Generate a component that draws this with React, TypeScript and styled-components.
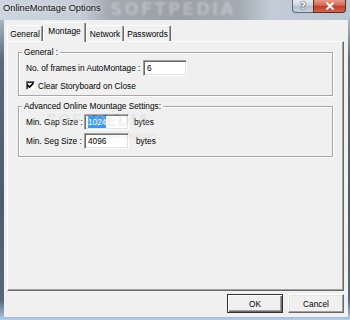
import React from "react";
import styled, { createGlobalStyle } from "styled-components";

const Global = createGlobalStyle`
  html, body { margin: 0; padding: 0; background: #5f7386; }
  body { font-family: "Liberation Sans", Arial, sans-serif; }
  * { box-sizing: border-box; }
`;

const Window = styled.div`
  width: 350px;
  height: 320px;
  display: flex;
  flex-direction: column;
  overflow: hidden;
  position: relative;
  font-family: "Liberation Sans", Arial, sans-serif;
  font-size: 8.3px;
  color: #000;
`;

const TitleBar = styled.div`
  height: 20px;
  flex: none;
  display: flex;
  align-items: flex-start;
  position: relative;
  background: linear-gradient(
    to right,
    #cdd5de 0px,
    #c4ccd5 80px,
    #a3a9b0 110px,
    #9a9fa5 180px,
    #a4abb2 240px,
    #c2ccd6 270px,
    #b9c6d3 350px
  );
`;

const Title = styled.div`
  font-size: 9.3px;
  line-height: 16px;
  padding-left: 3px;
  color: #111;
  text-shadow: 0 0 4px rgba(255, 255, 255, 0.9);
  position: relative;
  z-index: 1;
`;

const TitleMark = styled.div`
  position: absolute;
  left: 110px;
  top: 0px;
  line-height: 18px;
  font-family: "DejaVu Sans", sans-serif;
  font-weight: bold;
  font-size: 17px;
  letter-spacing: 2px;
  color: rgba(222, 225, 229, 0.4);
  filter: blur(0.8px);
  pointer-events: none;
`;

const Captions = styled.div`
  margin-left: auto;
  margin-right: 4px;
  display: flex;
`;

const HelpButton = styled.div`
  width: 21px;
  height: 13px;
  border: 1px solid #5d6d7d;
  border-right: none;
  border-top: none;
  border-radius: 0 0 0 4px;
  background: linear-gradient(#e4eaf0 0%, #ccd5df 45%, #b2bfcc 50%, #c6d2de 100%);
  display: flex;
  align-items: center;
  justify-content: center;
  font-family: "DejaVu Sans", sans-serif;
  font-weight: bold;
  font-size: 9px;
  color: #fff;
  text-shadow: 0 0 2px #333, 0 0 1px #333;
`;

const CloseButton = styled.div`
  width: 33px;
  height: 13px;
  border: 1px solid #5a2a24;
  border-top: none;
  border-radius: 0 0 4px 0;
  background: linear-gradient(#e69a86 0%, #d4674f 45%, #c23b22 50%, #d6654a 100%);
  display: flex;
  align-items: center;
  justify-content: center;
`;

const Frame = styled.div`
  flex: 1;
  display: flex;
  padding: 0 2px 3px 4px;
  background: linear-gradient(
    to bottom,
    #a9b5c1 0px,
    #5a6b7c 40px,
    #4d5d6e 180px,
    #55687b 280px,
    #9fbcd8 297px,
    #b7d0e8 300px
  );
`;

const Client = styled.div`
  flex: 1;
  background: #f0f0f0;
  display: flex;
  flex-direction: column;
  padding: 2px 4px 4px 3px;
  position: relative;
`;

const TabStrip = styled.div`
  height: 19px;
  flex: none;
  display: flex;
  align-items: flex-end;
  position: relative;
  z-index: 1;
`;

const Tab = styled.div<{ $active?: boolean; $w: number }>`
  width: ${(p) => p.$w}px;
  height: ${(p) => (p.$active ? 20 : 16)}px;
  margin-bottom: ${(p) => (p.$active ? -1 : 0)}px;
  background: #f0f0f0;
  border-left: 1px solid #fff;
  border-top: 1px solid #fff;
  border-right: 1px solid #696969;
  box-shadow: inset -1px 0 0 #a0a0a0;
  border-radius: 2px 2px 0 0;
  display: flex;
  align-items: center;
  justify-content: center;
  padding-bottom: ${(p) => (p.$active ? 3 : 0)}px;
  white-space: nowrap;
`;

const Panel = styled.div`
  flex: 1;
  border-top: 1px solid #fff;
  border-left: 1px solid #fff;
  border-right: 1px solid #696969;
  border-bottom: 1px solid #696969;
  box-shadow: inset -1px -1px 0 #a0a0a0;
  padding: 10px 10px 0 10px;
  display: flex;
  flex-direction: column;
  gap: 10px;
`;

const Group = styled.div<{ $pt: number; $pb: number; $gap: number }>`
  position: relative;
  border: 1px solid #a7a7a7;
  box-shadow: inset 1px 1px 0 #fff, 1px 1px 0 #fff;
  padding: ${(p) => p.$pt}px 7px ${(p) => p.$pb}px 7px;
  display: flex;
  flex-direction: column;
  gap: ${(p) => p.$gap}px;
`;

const Legend = styled.div`
  position: absolute;
  left: 3px;
  top: -6px;
  line-height: 10px;
  padding: 0 2px;
  background: #f0f0f0;
  white-space: nowrap;
`;

const Row = styled.div<{ $h: number }>`
  height: ${(p) => p.$h}px;
  display: flex;
  align-items: center;
  white-space: nowrap;
`;

const Label = styled.div<{ $w: number }>`
  width: ${(p) => p.$w}px;
  flex: none;
`;

const Input = styled.div<{ $w: number; $h: number }>`
  width: ${(p) => p.$w}px;
  height: ${(p) => p.$h}px;
  flex: none;
  background: #fff;
  border: 1px solid;
  border-color: #a0a0a0 #fff #fff #a0a0a0;
  box-shadow: inset 1px 1px 0 #696969, inset -1px -1px 0 #e3e3e3;
  padding-left: 3px;
  display: flex;
  align-items: center;
`;

const Selected = styled.span`
  background: #3399ff;
  color: #fff;
  padding: 1px 0;
`;

const Unit = styled.div<{ $ml: number }>`
  margin-left: ${(p) => p.$ml}px;
`;

const CheckBox = styled.div`
  width: 9px;
  height: 9px;
  flex: none;
  background: #fff;
  border: 1px solid;
  border-color: #707070 #fff #fff #707070;
  box-shadow: inset 1px 1px 0 #303030;
  display: flex;
  align-items: center;
  justify-content: center;
  margin-right: 3px;
`;

const Buttons = styled.div`
  height: 19px;
  margin-top: 3px;
  flex: none;
  display: flex;
  justify-content: flex-end;
  gap: 5px;
`;

const Button = styled.div<{ $default?: boolean }>`
  width: 56px;
  height: 19px;
  background: #f0f0f0;
  border: 1px solid;
  border-color: ${(p) => (p.$default ? "#303030" : "#fff #696969 #696969 #fff")};
  box-shadow: ${(p) =>
    p.$default
      ? "inset 1px 1px 0 #fff, inset -1px -1px 0 #696969, inset -2px -2px 0 #a0a0a0"
      : "inset -1px -1px 0 #a0a0a0, inset 1px 1px 0 #e3e3e3"};
  display: flex;
  align-items: center;
  justify-content: center;
`;

const BodyMark = styled.div`
  position: absolute;
  left: 42px;
  top: 92px;
  font-family: "DejaVu Sans", sans-serif;
  font-weight: bold;
  font-size: 15px;
  letter-spacing: 1px;
  color: rgba(205, 205, 205, 0.3);
  pointer-events: none;
`;

const BodyMarkSmall = styled.div`
  position: absolute;
  left: 92px;
  top: 112px;
  font-size: 7px;
  color: rgba(190, 190, 190, 0.35);
  pointer-events: none;
`;

export default function App() {
  return (
    <>
      <Global />
      <Window>
        <TitleBar>
          <TitleMark>SOFTPEDIA</TitleMark>
          <Title>OnlineMontage Options</Title>
          <Captions>
            <HelpButton>?</HelpButton>
            <CloseButton>
              <svg width="10" height="8" viewBox="0 0 10 8">
                <path d="M1.5 0.5 L8.5 7.5 M8.5 0.5 L1.5 7.5" stroke="#fff" strokeWidth="2" />
              </svg>
            </CloseButton>
          </Captions>
        </TitleBar>
        <Frame>
          <Client>
            <TabStrip>
              <Tab $w={36}>General</Tab>
              <Tab $w={43} $active>
                Montage
              </Tab>
              <Tab $w={38}>Network</Tab>
              <Tab $w={47}>Passwords</Tab>
            </TabStrip>
            <Panel>
              <Group $pt={7} $pb={3} $gap={3}>
                <Legend>General :</Legend>
                <Row $h={16}>
                  <Label $w={117}>No. of frames in AutoMontage :</Label>
                  <Input $w={44} $h={16}>6</Input>
                </Row>
                <Row $h={13}>
                  <CheckBox>
                    <svg width="7" height="7" viewBox="0 0 7 7">
                      <path d="M0.5 3 L2.5 5 L6.5 1" stroke="#000" strokeWidth="1.6" fill="none" />
                    </svg>
                  </CheckBox>
                  Clear Storyboard on Close
                </Row>
              </Group>
              <Group $pt={7} $pb={7} $gap={3}>
                <Legend>Advanced Online Mountage Settings:</Legend>
                <Row $h={16}>
                  <Label $w={58}>Min. Gap Size :</Label>
                  <Input $w={45} $h={16}>
                    <Selected>1024</Selected>
                  </Input>
                  <Unit $ml={5}>bytes</Unit>
                </Row>
                <Row $h={16}>
                  <Label $w={58}>Min. Seg Size :</Label>
                  <Input $w={45} $h={16}>4096</Input>
                  <Unit $ml={7}>bytes</Unit>
                </Row>
              </Group>
            </Panel>
            <Buttons>
              <Button $default>OK</Button>
              <Button>Cancel</Button>
            </Buttons>
            <BodyMark>SOFTPEDIA</BodyMark>
            <BodyMarkSmall>www.softpedia.com</BodyMarkSmall>
          </Client>
        </Frame>
      </Window>
    </>
  );
}
